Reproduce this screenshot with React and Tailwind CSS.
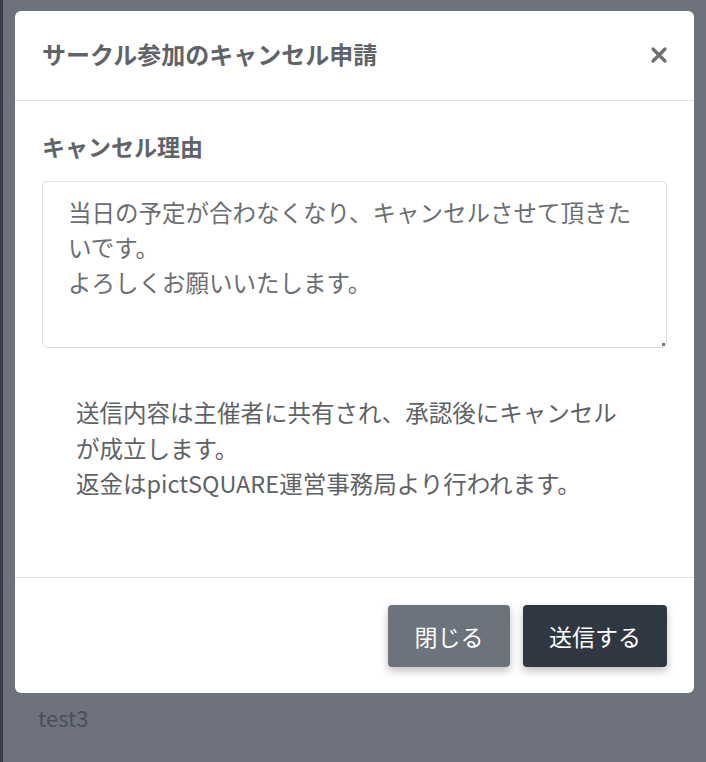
export default function App() {
  const jp = { fontFamily: '"Noto Sans CJK JP", "Noto Sans", sans-serif' };
  return (
    <div className="h-[762px] w-[706px] overflow-hidden bg-[#3a3e45] flex" style={jp}>
      <div className="ml-[3px] flex-1 bg-[#6d727c] px-[12px] pt-[11px]">
        {/* Modal */}
        <div className="bg-white rounded-[6px] flex flex-col">
          <div className="h-[90px] flex items-center justify-between pl-[27px] pr-[26px] pb-[3px] border-b border-[#e3e4e6]">
            <h2 className="text-[24px] font-bold text-[#606469] leading-none">サークル参加のキャンセル申請</h2>
            <svg width="18" height="18" viewBox="0 0 18 18" className="mt-[2px]">
              <path d="M3 3 L15 15 M15 3 L3 15" stroke="#6b6e73" strokeWidth="3.2" strokeLinecap="round" />
            </svg>
          </div>
          <div className="px-[27px] pt-[28px] h-[477px] border-b border-[#e3e4e6]">
            <div className="text-[23px] font-bold text-[#606469] leading-[35px]">キャンセル理由</div>
            <div className="relative mt-[17px] h-[167px] border border-[#dfe0e2] rounded-[5px] pl-[25px] pr-[25px] pt-[13px] text-[23.5px] leading-[35px] text-[#6b6e72]">
              <p>当日の予定が合わなくなり、キャンセルさせて頂きたいです。</p>
              <p>よろしくお願いいたします。</p>
              <span className="absolute right-[1px] bottom-[1px] w-[3px] h-[3px] bg-[#777]" />
            </div>
            <div className="mt-[47px] px-[34px] text-[23.5px] leading-[35.5px] text-[#5f6265]">
              <p>送信内容は主催者に共有され、承認後にキャンセルが成立します。</p>
              <p>返金はpictSQUARE運営事務局より行われます。</p>
            </div>
          </div>
          <div className="flex justify-end gap-[13px] px-[27px] pt-[27px] pb-[26px]">
            <button className="h-[62px] w-[122px] rounded-[4px] bg-[#6c737c] text-white text-[23px] shadow-[0_4px_8px_rgba(0,0,0,0.25)]">閉じる</button>
            <button className="h-[62px] w-[144px] rounded-[4px] bg-[#2f3743] text-white text-[23px] shadow-[0_4px_8px_rgba(0,0,0,0.25)]">送信する</button>
          </div>
        </div>
        <div className="pl-[23px] pt-[8px] text-[22px] text-[#4b5058]">test3</div>
      </div>
    </div>
  );
}
